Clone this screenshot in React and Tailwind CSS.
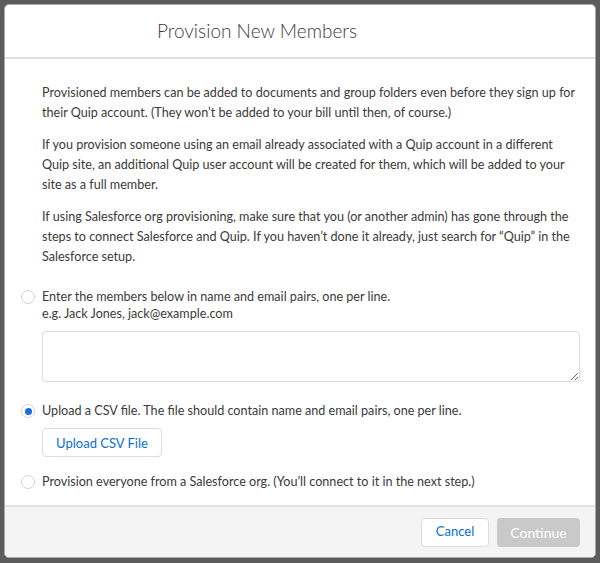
import React from 'react';

const Radio = ({ checked }) => (
  <span className="mt-[3px] flex h-[14px] w-[14px] shrink-0 items-center justify-center rounded-full border border-[#d4d4d4] bg-white">
    {checked && <span className="h-[7px] w-[7px] rounded-full bg-[#1a6fe0]" />}
  </span>
);

export default function App() {
  return (
    <div className="h-[563px] w-[600px] bg-[#5c5c5c] p-[4px]" style={{ fontFamily: 'Lato, "Open Sans", sans-serif' }}>
      <div className="flex h-[554px] flex-col overflow-hidden rounded-[5px] border border-[#a9a9a9] bg-white">
        <div className="flex h-[54px] shrink-0 items-center border-b-2 border-[#dddddd] pl-[152px]">
          <h1 className="text-[19px] font-light text-[#3a3a3a]">Provision New Members</h1>
        </div>

        <div className="flex-1 pl-[16px] pr-[15px] pt-[24px] text-[12.6px] leading-[20px] text-[#3a3a3a]">
          <div className="ml-[21px] flex flex-col gap-[12px]">
            <p>Provisioned members can be added to documents and group folders even before they sign up for their Quip account. (They won’t be added to your bill until then, of course.)</p>
            <p>If you provision someone using an email already associated with a Quip account in a different Quip site, an additional Quip user account will be created for them, which will be added to your site as a full member.</p>
            <p>If using Salesforce org provisioning, make sure that you (or another admin) has gone through the steps to connect Salesforce and Quip. If you haven’t done it already, just search for “Quip” in the Salesforce setup.</p>
          </div>

          <div className="mt-[20px] flex gap-[7px]">
            <Radio />
            <div className="flex-1">
              <p className="leading-[20px]">Enter the members below in name and email pairs, one per line.</p>
              <p className="-mt-[3px] leading-[20px]">e.g. Jack Jones, jack@example.com</p>
              <textarea className="mt-[7px] block h-[51px] w-full rounded-[4px] border border-[#dcdcdc] bg-white outline-none" />
            </div>
          </div>

          <div className="mt-[19px] flex gap-[7px]">
            <Radio checked />
            <div className="flex-1">
              <p>Upload a CSV file. The file should contain name and email pairs, one per line.</p>
              <button className="mt-[7px] h-[29px] w-[120px] rounded-[4px] border border-[#d8dde6] bg-white text-[13px] text-[#0a6fd6]">Upload CSV File</button>
            </div>
          </div>

          <div className="mt-[15px] flex gap-[7px]">
            <Radio />
            <p>Provision everyone from a Salesforce org. (You’ll connect to it in the next step.)</p>
          </div>
        </div>

        <div className="flex h-[52px] shrink-0 items-center justify-end gap-[8px] border-t-2 border-[#e2e2e2] bg-[#f4f4f4] pr-[15px]">
          <button className="h-[29px] w-[68px] rounded-[4px] border border-[#dcdcdc] bg-white text-[13px] text-[#0a6fd6]">Cancel</button>
          <button className="h-[29px] w-[83px] rounded-[4px] bg-[#c9c9c9] text-[14px] text-white">Continue</button>
        </div>
      </div>
    </div>
  );
}
